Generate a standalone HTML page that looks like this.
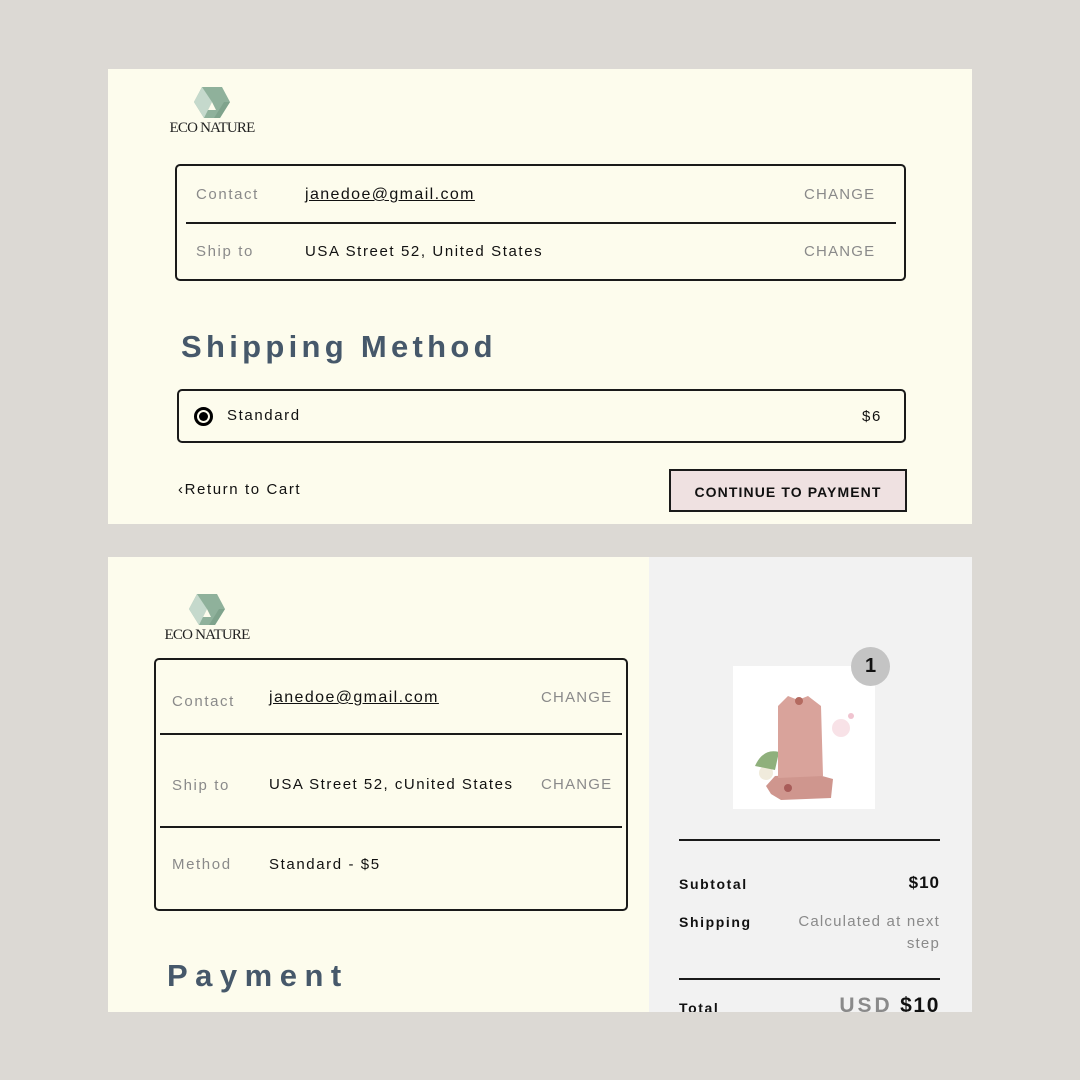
<!DOCTYPE html>
<html><head><meta charset="utf-8"><style>
*{margin:0;padding:0;box-sizing:border-box}
body{width:1080px;height:1080px;background:#dcd9d4;position:relative;overflow:hidden;font-family:"Liberation Sans",sans-serif}
.p{position:absolute}
.t{position:absolute;white-space:nowrap;line-height:20px;font-size:15px;letter-spacing:1.6px;color:#111}
.g{color:#8a8a8a}
.box{position:absolute;border:2px solid #1a1a1a;border-radius:5px}
.hr{position:absolute;height:2px;background:#1a1a1a}
.h{position:absolute;white-space:nowrap;font-weight:bold;color:#46586a;line-height:40px}
.logo text{font-family:"Liberation Serif",serif}
</style></head><body>
<!-- top panel -->
<div class="p" style="left:108px;top:69px;width:864px;height:455px;background:#fdfced"></div>
<svg class="p logo" style="left:166px;top:84px" width="92" height="54" viewBox="0 0 92 54">
<polygon points="36,3 56,3 64,18 54,34 38,34 28,18" fill="#8fb19b"/>
<polygon points="36,3 28,18 38,34 46,18" fill="#c5d9cc"/>
<polygon points="46,18 50,26 42,26" fill="#fdfced"/>
<polygon points="54,34 64,18 58,18 48,34" fill="#7fa38c"/>
<text x="46" y="48" font-size="15" text-anchor="middle" fill="#222" letter-spacing="-0.8">ECO NATURE</text>
</svg>
<div class="box" style="left:175px;top:164px;width:731px;height:117px"></div>
<div class="hr" style="left:186px;top:222px;width:710px"></div>
<div class="t g" style="left:196px;top:185px">Contact</div>
<div class="t" style="left:305px;top:185px;text-decoration:underline;letter-spacing:1.4px;font-size:16px">janedoe@gmail.com</div>
<div class="t g" style="left:804px;top:185px;letter-spacing:1.2px">CHANGE</div>
<div class="t g" style="left:196px;top:242px">Ship to</div>
<div class="t" style="left:305px;top:242px">USA Street 52, United States</div>
<div class="t g" style="left:804px;top:242px;letter-spacing:1.2px">CHANGE</div>
<div class="h" style="left:181px;top:327px;font-size:31px;letter-spacing:4.3px">Shipping Method</div>
<div class="box" style="left:177px;top:389px;width:729px;height:54px"></div>
<div class="p" style="left:194px;top:407px;width:19px;height:19px;border-radius:50%;border:3px solid #000;background:#fdfced"></div>
<div class="p" style="left:199px;top:412px;width:9px;height:9px;border-radius:50%;background:#000"></div>
<div class="t" style="left:227px;top:406px">Standard</div>
<div class="t" style="left:862px;top:407px">$6</div>
<div class="t" style="left:178px;top:480px">‹Return to Cart</div>
<div class="p" style="left:669px;top:469px;width:238px;height:43px;background:#efe1e1;border:2px solid #1a1a1a"></div>
<div class="t" style="left:669px;top:482px;width:238px;text-align:center;font-weight:bold;font-size:14px;letter-spacing:1.1px">CONTINUE TO PAYMENT</div>

<!-- bottom panel -->
<div class="p" style="left:108px;top:557px;width:541px;height:455px;background:#fdfced"></div>
<div class="p" style="left:649px;top:557px;width:323px;height:455px;background:#f2f2f2"></div>
<svg class="p logo" style="left:161px;top:591px" width="92" height="54" viewBox="0 0 92 54">
<polygon points="36,3 56,3 64,18 54,34 38,34 28,18" fill="#8fb19b"/>
<polygon points="36,3 28,18 38,34 46,18" fill="#c5d9cc"/>
<polygon points="46,18 50,26 42,26" fill="#fdfced"/>
<polygon points="54,34 64,18 58,18 48,34" fill="#7fa38c"/>
<text x="46" y="48" font-size="15" text-anchor="middle" fill="#222" letter-spacing="-0.8">ECO NATURE</text>
</svg>
<div class="box" style="left:154px;top:658px;width:474px;height:253px"></div>
<div class="hr" style="left:160px;top:733px;width:462px"></div>
<div class="hr" style="left:160px;top:826px;width:462px"></div>
<div class="t g" style="left:172px;top:692px">Contact</div>
<div class="t" style="left:269px;top:688px;text-decoration:underline;letter-spacing:1.4px;font-size:16px">janedoe@gmail.com</div>
<div class="t g" style="left:541px;top:688px;letter-spacing:1.2px">CHANGE</div>
<div class="t g" style="left:172px;top:776px">Ship to</div>
<div class="t" style="left:269px;top:775px;letter-spacing:1.5px">USA Street 52, cUnited States</div>
<div class="t g" style="left:541px;top:775px;letter-spacing:1.2px">CHANGE</div>
<div class="t g" style="left:172px;top:855px">Method</div>
<div class="t" style="left:269px;top:855px">Standard - $5</div>
<div class="h" style="left:167px;top:956px;font-size:31px;letter-spacing:7.5px">Payment</div>

<div class="p" style="left:733px;top:666px;width:142px;height:143px;background:#fff"></div>
<svg class="p" style="left:733px;top:666px" width="142" height="143" viewBox="0 0 142 143">
<circle cx="33" cy="107" r="7" fill="#f0ebdc"/>
<path d="M22 100 Q30 82 46 86 L42 104 Z" fill="#8fb07c"/>
<circle cx="108" cy="62" r="9" fill="#f6dbe1" opacity="0.8"/>
<circle cx="118" cy="50" r="3" fill="#f0c4d0"/>
<path d="M33 120 L42 110 L82 108 L100 113 L98 132 L48 134 L38 128 Z" fill="#cf968e"/>
<path d="M45 40 L55 30 L65 34 L75 30 L88 40 L90 110 L45 112 Z" fill="#d9a39b"/>
<circle cx="66" cy="35" r="4" fill="#b46a60"/>
<circle cx="55" cy="122" r="4" fill="#a85c59"/>
</svg>
<div class="p" style="left:851px;top:647px;width:39px;height:39px;border-radius:50%;background:#c4c4c4"></div>
<div class="t" style="left:851px;top:655px;width:39px;text-align:center;font-weight:bold;font-size:20px;letter-spacing:0;line-height:22px">1</div>
<div class="hr" style="left:679px;top:839px;width:261px"></div>
<div class="t" style="left:679px;top:874px;font-weight:bold;font-size:14px">Subtotal</div>
<div class="t" style="left:880px;top:873px;width:60px;text-align:right;font-weight:bold;font-size:17px;letter-spacing:1px">$10</div>
<div class="t" style="left:679px;top:912px;font-weight:bold;font-size:14px">Shipping</div>
<div class="t g" style="left:760px;top:912px;width:180px;text-align:right;letter-spacing:1.2px">Calculated at next</div>
<div class="t g" style="left:760px;top:934px;width:180px;text-align:right;letter-spacing:1.2px">step</div>
<div class="hr" style="left:679px;top:978px;width:261px"></div>
<div class="t" style="left:679px;top:998px;font-weight:bold;font-size:14px">Total</div>
<div class="t" style="left:800px;top:994px;width:140px;text-align:right;font-weight:bold;font-size:21px;line-height:24px"><span style="color:#8a8a8a;letter-spacing:3px">USD</span> $10</div>
<div class="p" style="left:0;top:1012px;width:1080px;height:68px;background:#dcd9d4"></div>
</body></html>
